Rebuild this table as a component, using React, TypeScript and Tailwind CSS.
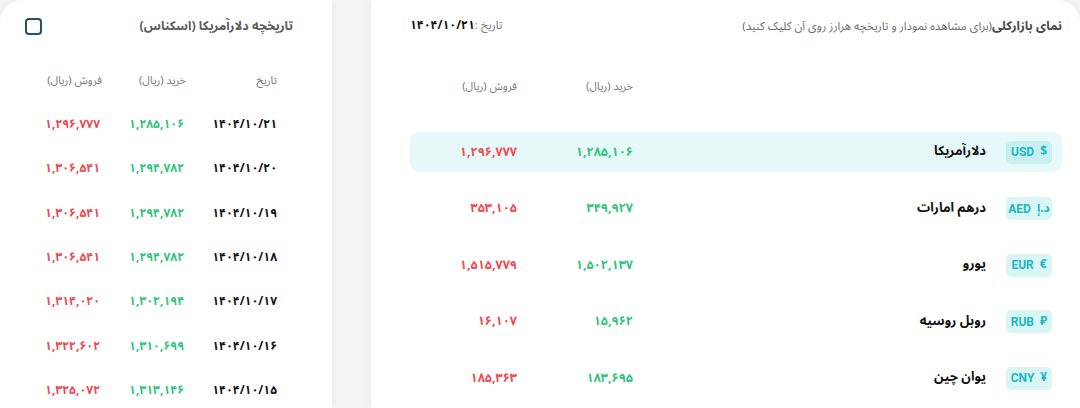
import React from 'react';

const fa = (s: string) => s.replace(/\d/g, (d) => '۰۱۲۳۴۵۶۷۸۹'[Number(d)]);

const currencies = [
  { code: 'USD', symbol: '$', name: 'دلارآمریکا', buy: '1,285,106', sell: '1,296,777', active: true },
  { code: 'AED', symbol: 'د.إ', name: 'درهم امارات', buy: '349,927', sell: '353,105' },
  { code: 'EUR', symbol: '€', name: 'یورو', buy: '1,502,137', sell: '1,515,779' },
  { code: 'RUB', symbol: '₽', name: 'روبل روسیه', buy: '15,962', sell: '16,107' },
  { code: 'CNY', symbol: '¥', name: 'یوان چین', buy: '183,695', sell: '185,363' },
];

const history = [
  { date: '1404/10/21', buy: '1,285,106', sell: '1,296,777' },
  { date: '1404/10/20', buy: '1,294,782', sell: '1,306,541' },
  { date: '1404/10/19', buy: '1,294,782', sell: '1,306,541' },
  { date: '1404/10/18', buy: '1,294,782', sell: '1,306,541' },
  { date: '1404/10/17', buy: '1,302,194', sell: '1,314,020' },
  { date: '1404/10/16', buy: '1,310,699', sell: '1,322,602' },
  { date: '1404/10/15', buy: '1,313,146', sell: '1,325,072' },
];

const font = { fontFamily: '"Noto Sans Arabic", "Noto Sans", "DejaVu Sans", sans-serif' };

export default function App() {
  return (
    <div className="w-[1080px] h-[408px] overflow-hidden bg-[#f4f4f5] flex" style={font}>
      {/* History card */}
      <div dir="rtl" className="w-[332px] shrink-0 bg-white rounded-tl-[22px] shadow-[0_0_6px_rgba(0,0,0,0.06)]">
        <div className="flex items-center justify-between pr-[39px] pl-[25px] h-[52px]">
          <h2 className="text-[12.5px] font-bold text-[#5b5b5b]">تاریخچه دلارآمریکا (اسکناس)</h2>
          <span className="w-[17px] h-[17px] rounded-[4px] border-2 border-[#24506e]" />
        </div>
        <div className="grid grid-cols-[91px_84px_1fr] pr-[55px] text-[11px] text-[#7a7a7a] h-[58px] items-center">
          <span>تاریخ</span>
          <span>خرید (ریال)</span>
          <span>فروش (ریال)</span>
        </div>
        <div className="flex flex-col -mt-[7px]">
          {history.map((r) => (
            <div key={r.date} className="grid grid-cols-[93px_84px_1fr] pr-[55px] h-[44.3px] items-center text-[12px] font-bold">
              <span className="text-[#111]"><span dir="ltr">{fa(r.date)}</span></span>
              <span className="text-[#2fc47b]"><span dir="ltr">{fa(r.buy)}</span></span>
              <span className="text-[#ee4a52]"><span dir="ltr">{fa(r.sell)}</span></span>
            </div>
          ))}
        </div>
      </div>

      {/* Market overview card */}
      <div dir="rtl" className="ml-[39px] flex-1 bg-white rounded-tr-[22px] shadow-[0_0_6px_rgba(0,0,0,0.06)] pr-[18px] pl-[39px]">
        <div className="flex items-center justify-between h-[52px]">
          <p className="text-[11.5px] text-[#6b6b6b]">
            <span className="font-bold text-[12.5px] text-[#4a4a4a]">نمای بازارکلی</span>
            (برای مشاهده نمودار و تاریخچه هرارز روی آن کلیک کنید)
          </p>
          <p className="text-[11.5px] text-[#777]">
            تاریخ :<span dir="ltr" className="font-bold text-[12px] text-[#111]">{fa('1404/10/21')}</span>
          </p>
        </div>
        <div className="grid grid-cols-[1fr_116px_107px] pr-[10px] text-[11px] text-[#7a7a7a] h-[70px] items-center">
          <span />
          <span>خرید (ریال)</span>
          <span>فروش (ریال)</span>
        </div>
        <div className="flex flex-col gap-[16.5px] mt-[10px]">
          {currencies.map((c) => (
            <div
              key={c.code}
              className={`grid grid-cols-[1fr_116px_107px] pr-[10px] h-[40px] items-center rounded-[9px] ${c.active ? 'bg-[#e6f8f8]' : ''}`}
            >
              <div className="flex items-center gap-[20px]">
                <span className={`h-[23px] w-[46px] rounded-[5px] flex items-center justify-center gap-[6px] text-[12px] font-bold text-[#19b9c2] ${c.active ? 'bg-[#c7eff0]' : 'bg-[#d9f5f5]'}`}>
                  <span>{c.symbol}</span>
                  <span style={{ fontFamily: 'Roboto, sans-serif' }}>{c.code}</span>
                </span>
                <span className="text-[13px] font-bold text-[#111]">{c.name}</span>
              </div>
              <span className="text-[12.5px] font-bold text-[#2fc47b]"><span dir="ltr">{fa(c.buy)}</span></span>
              <span className="text-[12.5px] font-bold text-[#ee4a52]"><span dir="ltr">{fa(c.sell)}</span></span>
            </div>
          ))}
        </div>
      </div>
    </div>
  );
}
